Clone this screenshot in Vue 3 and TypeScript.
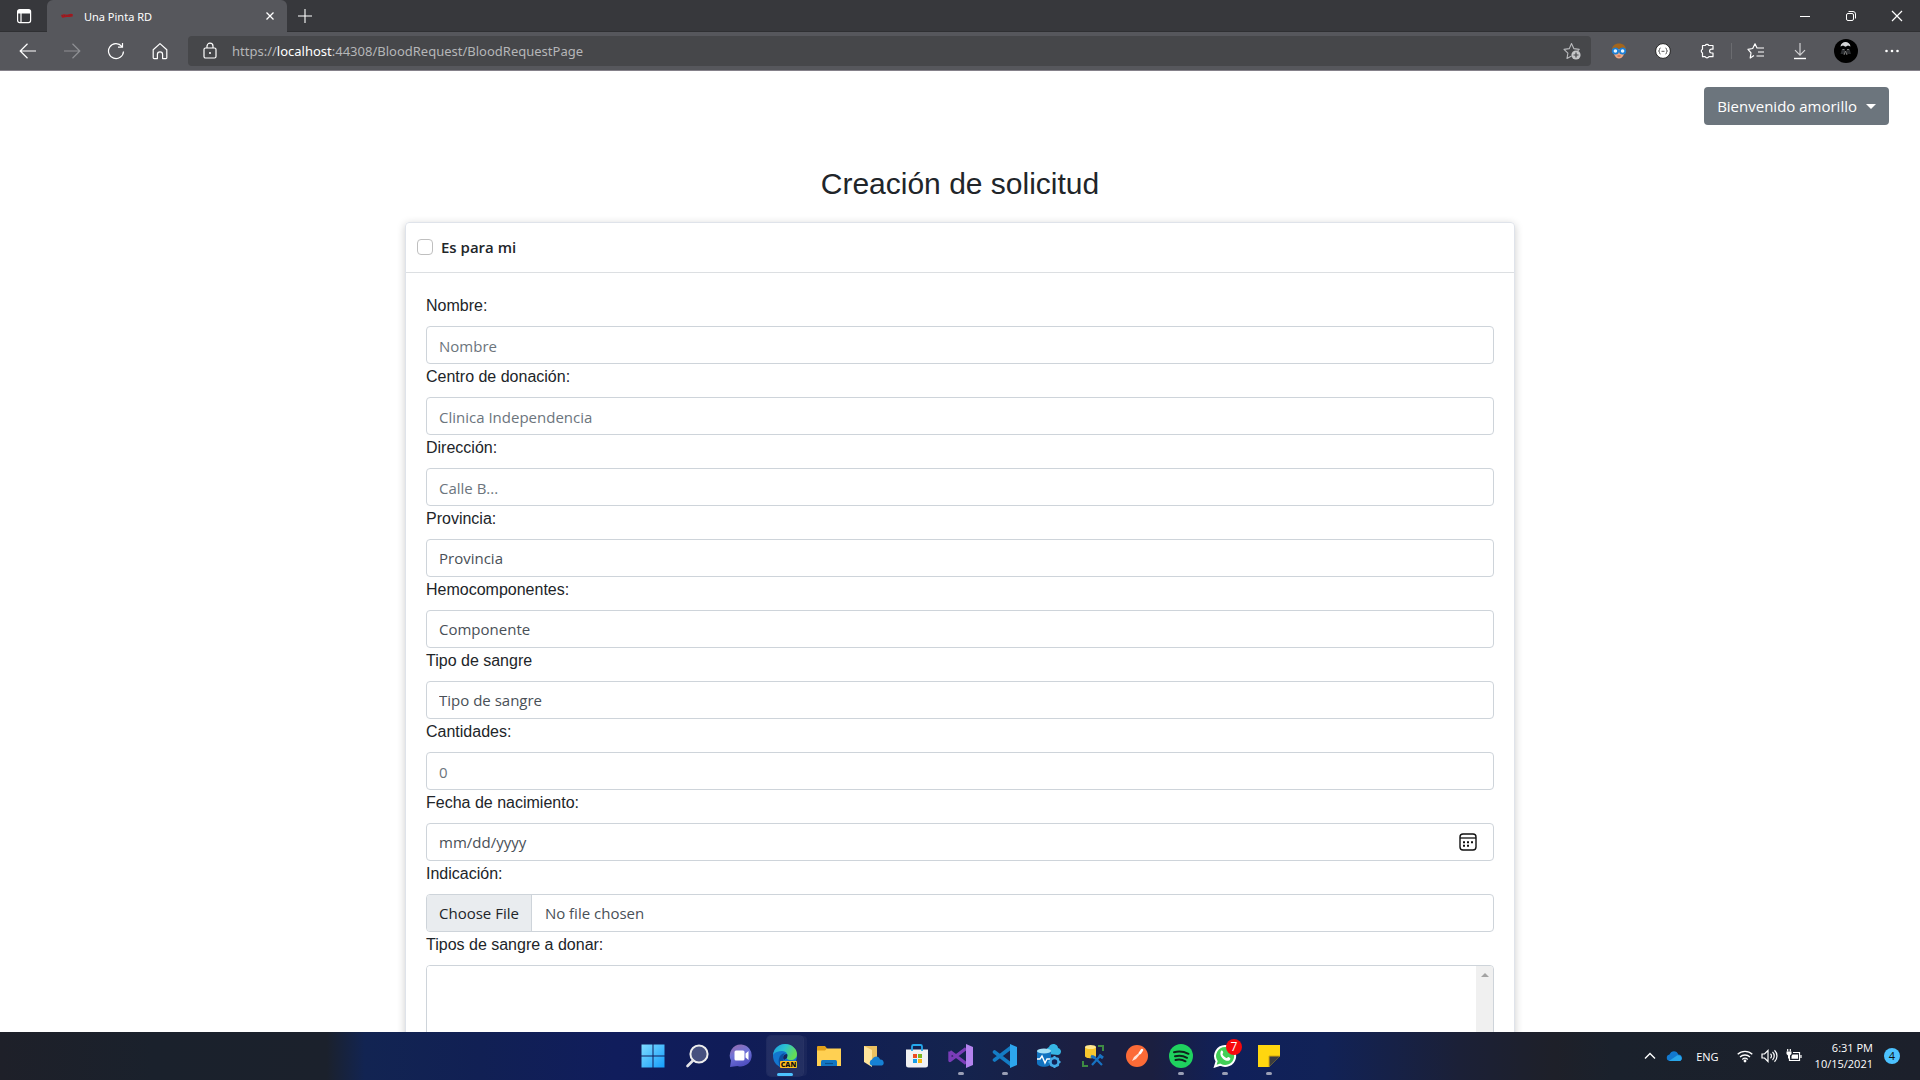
<script setup lang="ts">
import { ref } from 'vue'

interface Field {
  id: string
  label: string
  type: 'text' | 'number' | 'select'
  placeholder: string
}

const fields: Field[] = [
  { id: 'nombre', label: 'Nombre:', type: 'text', placeholder: 'Nombre' },
  { id: 'centro', label: 'Centro de donación:', type: 'text', placeholder: 'Clinica Independencia' },
  { id: 'direccion', label: 'Dirección:', type: 'text', placeholder: 'Calle B...' },
  { id: 'provincia', label: 'Provincia:', type: 'select', placeholder: 'Provincia' },
  { id: 'hemocomponentes', label: 'Hemocomponentes:', type: 'select', placeholder: 'Componente' },
  { id: 'tipo', label: 'Tipo de sangre', type: 'select', placeholder: 'Tipo de sangre' },
  { id: 'cantidades', label: 'Cantidades:', type: 'number', placeholder: '0' },
]

const forMe = ref(false)
const birthDate = ref('')
const fileInput = ref<HTMLInputElement | null>(null)
const fileName = ref('No file chosen')

function onFile(e: Event) {
  const f = (e.target as HTMLInputElement).files
  fileName.value = f && f.length ? f[0].name : 'No file chosen'
}
</script>

<template>
  <div class="desktop">
    <header class="browser">
      <div class="tabstrip">
        <button class="tab-menu" aria-label="Tab actions">
          <svg width="16" height="16" viewBox="0 0 16 16" fill="none" stroke="#fff" stroke-width="1.2">
            <rect x="1.6" y="1.6" width="13" height="13" rx="2" />
            <path d="M2 3h12M2 4.600h12" stroke-width="1.8" />
            <path d="M5 5v9.500" />
          </svg>
        </button>
        <div class="tab">
          <svg class="favicon" width="16" height="16" viewBox="0 0 16 16">
            <path d="M2 7l3-.8 3 .5 4-.9 2 .6-.5 2.200-3 .3-3 .1-4 .7-.6-.4z" fill="#a8161c" />
            <path d="M3 7.600h3M7.500 7.400h5" stroke="#742a30" stroke-width="1" stroke-dasharray="1 1" />
          </svg>
          <span class="tab-title">Una Pinta RD</span>
          <button class="tab-close" aria-label="Close tab">
            <svg width="8" height="8" viewBox="0 0 8 8" stroke="#fff" stroke-width="1.3"><path d="M.5.5l7 7M7.500.5l-7 7" /></svg>
          </button>
        </div>
        <button class="new-tab" aria-label="New tab">
          <svg width="14" height="14" viewBox="0 0 14 14" stroke="#fff" stroke-width="1.1"><path d="M7 0v14M0 7h14" /></svg>
        </button>
        <div class="window-controls">
          <button aria-label="Minimize"><svg width="12" height="12" viewBox="0 0 12 12" stroke="#fff"><path d="M1 6.500h10" /></svg></button>
          <button aria-label="Restore">
            <svg width="12" height="12" viewBox="0 0 12 12" fill="none" stroke="#fff"><rect x="1.500" y="3.500" width="7" height="7" rx="1.500" /><path d="M3.500 1.500H8a2.500 2.500 0 0 1 2.500 2.500V8.500" /></svg>
          </button>
          <button aria-label="Close"><svg width="12" height="12" viewBox="0 0 12 12" stroke="#fff" stroke-width="1.2"><path d="M1 1l10 10M11 1L1 11" /></svg></button>
        </div>
      </div>

      <div class="toolbar">
        <nav class="nav">
          <button aria-label="Back"><svg width="18" height="18" viewBox="0 0 18 18" fill="none" stroke="#fff" stroke-width="1.2"><path d="M17 9H1.500M8.500 1.800L1.200 9l7.300 7.200" /></svg></button>
          <button aria-label="Forward"><svg width="18" height="18" viewBox="0 0 18 18" fill="none" stroke="#8f9094" stroke-width="1.2"><path d="M1 9h15.500M9.500 1.800L16.800 9l-7.300 7.200" /></svg></button>
          <button aria-label="Refresh"><svg width="18" height="18" viewBox="0 0 18 18" fill="none" stroke="#fff" stroke-width="1.2"><path d="M16.500 9.500A7.500 7.500 0 1 1 14.800 4.300M15.500 1v4.200h-4.500" /></svg></button>
          <button aria-label="Home"><svg width="18" height="18" viewBox="0 0 18 18" fill="none" stroke="#fff" stroke-width="1.2"><path d="M2.200 7.800L9 1.600l6.800 6.200v8a.8.8 0 0 1-.8.8h-3.400v-4.200a2.600 2.600 0 0 0-5.200 0v4.200H3a.8.8 0 0 1-.8-.8z" stroke-linejoin="round" /></svg></button>
        </nav>
        <div class="address">
          <svg class="lock" width="16" height="18" viewBox="0 0 16 18" fill="none" stroke="#fff" stroke-width="1.2"><rect x="2" y="6" width="12" height="10" rx="1.500" /><path d="M5 6V4.200a3 3 0 0 1 6 0V6" /><circle cx="8" cy="11" r="1" fill="#fff" stroke="none" /></svg>
          <a class="url" href="#">https://<b>localhost</b>:44308/BloodRequest/BloodRequestPage</a>
          <button aria-label="Add to favorites">
            <svg width="18" height="18" viewBox="0 0 18 18" fill="none" stroke="#b9babd" stroke-width="1.1" stroke-linejoin="round"><path d="M8.500 14L4 16.400l.9-5.300L1 7.400l5.300-.8L8.500 1.500l2.300 5.100 5.400.8-1.500 1.500" /><circle cx="13" cy="13" r="4.600" fill="#c4c5c7" stroke="none" /><path d="M13 10.500v5M10.500 13h5" stroke="#48494c" stroke-width="1.200" /></svg>
          </button>
        </div>
        <div class="extensions">
          <button aria-label="Profile extension">
            <svg width="16" height="16" viewBox="0 0 16 16"><path d="M3 6h10v5c-1 3-3 4.600-5 4.600S4 14 3 11z" fill="#eda883" /><path d="M1.500 8C0 3 4 .5 8 .5S16 3 14.500 8L12 5 8 6 4 5z" fill="#a3651c" /><circle cx="4.400" cy="8" r="2.700" fill="#e8f6ff" stroke="#1c7fd6" stroke-width="1.800" /><circle cx="11.600" cy="8" r="2.700" fill="#e8f6ff" stroke="#1c7fd6" stroke-width="1.800" /><path d="M6.500 13h3" stroke="#b6543e" /></svg>
          </button>
          <button aria-label="JSON viewer">
            <svg width="16" height="16" viewBox="0 0 16 16" fill="none" stroke="#555" stroke-width="1"><circle cx="8" cy="8" r="7.400" fill="#fff" stroke="#222" /><path d="M5.500 5Q4.500 5 4.500 6.500T3.500 8q1 0 1 1.500T5.500 11M10.500 5q1 0 1 1.500t1 1.500q-1 0-1 1.500t-1 1.500M6.500 8.300h3" /></svg>
          </button>
          <button aria-label="Extensions">
            <svg width="16" height="16" viewBox="0 0 16 16" fill="none" stroke="#fff" stroke-width="1.200" stroke-linejoin="round"><path d="M3.500 2.500h2.700a2 2 0 0 1 3.600 0H14v3.700h-1.500a1.900 1.900 0 0 0 0 3.800H14v3.700H9.800a2 2 0 0 1-3.600 0H3.500V10a2.100 2.100 0 0 1 0-3.800z" /></svg>
          </button>
          <span class="divider"></span>
          <button aria-label="Favorites">
            <svg width="18" height="18" viewBox="0 0 18 18" fill="none" stroke="#fff" stroke-width="1.200" stroke-linejoin="round"><path d="M7 13.500L3.200 16l.8-5.200L1 7.300l4.700-.8L8 1.800l2 4.200h7M11 10h6M9.500 14H17" /></svg>
          </button>
          <button aria-label="Downloads">
            <svg width="14" height="18" viewBox="0 0 14 18" fill="none" stroke="#d0d0d2" stroke-width="1.200"><path d="M7 1v12M2 8.200l5 5 5-5" /><path d="M1 16.500h12" stroke="#fff" stroke-width="1.400" /></svg>
          </button>
          <button class="profile" aria-label="Profile">
            <svg width="24" height="24" viewBox="0 0 24 24"><circle cx="12" cy="12" r="12" fill="#000" /><path d="M6.500 7.500C7 1.500 16 1.500 16.500 7.500L14 6.500l-2.500 1.200L9 6.500z" fill="#d4d5d6" /><path d="M6.500 15l1.500-5 3 1 .5 4zM17 15l-1.500-5-3 1-.5 4z" fill="#2b2d30" /><path d="M8.500 10.500h2M13 10.500h2M10 16l1.500-4 1.500 4" stroke="#777" stroke-width="1" fill="none" /></svg>
          </button>
          <button aria-label="More">
            <svg width="14" height="4" viewBox="0 0 14 4" fill="#fff"><circle cx="1.500" cy="2" r="1.300" /><circle cx="7" cy="2" r="1.300" /><circle cx="12.500" cy="2" r="1.300" /></svg>
          </button>
        </div>
      </div>
    </header>

    <main class="page">
      <div class="userbar">
        <button class="user-button">Bienvenido amorillo <span class="caret"></span></button>
      </div>
      <h2>Creación de solicitud</h2>
      <form class="card" @submit.prevent>
        <div class="card-header">
          <input id="for-me" v-model="forMe" type="checkbox" />
          <label for="for-me">Es para mi</label>
        </div>
        <div class="card-body">
          <div v-for="f in fields" :key="f.id" class="field">
            <label :for="f.id">{{ f.label }}</label>
            <select v-if="f.type === 'select'" :id="f.id" class="control">
              <option>{{ f.placeholder }}</option>
            </select>
            <input v-else :id="f.id" class="control" :type="f.type" :placeholder="f.placeholder" />
          </div>
          <div class="field">
            <label for="fecha">Fecha de nacimiento:</label>
            <div class="control date">
              <input id="fecha" v-model="birthDate" type="text" placeholder="mm/dd/yyyy" />
              <button type="button" aria-label="Abrir calendario">
                <svg width="18" height="18" viewBox="0 0 18 18" fill="none" stroke="#111" stroke-width="1.400"><rect x="1" y="1" width="16" height="16" rx="3" /><path d="M1 5h16" stroke-width="1.300" /><path d="M4 9.200h2M8 9.200h2M12 9.200h2M4 12.700h2M8 12.700h2" stroke-width="2" /></svg>
              </button>
            </div>
          </div>
          <div class="field">
            <label for="indicacion">Indicación:</label>
            <div class="control file">
              <button type="button" @click="fileInput?.click()">Choose File</button>
              <span>{{ fileName }}</span>
              <input id="indicacion" ref="fileInput" type="file" hidden @change="onFile" />
            </div>
          </div>
          <div class="field">
            <label for="donar">Tipos de sangre a donar:</label>
            <div class="listbox">
              <select id="donar" multiple></select>
              <div class="scrollbar"><svg width="8" height="4" viewBox="0 0 8 4"><path d="M0 4l4-4 4 4z" fill="#a3a3a3" /></svg></div>
            </div>
          </div>
        </div>
      </form>
    </main>

    <footer class="taskbar">
      <div class="apps">
        <button aria-label="Start">
          <svg width="24" height="24" viewBox="0 0 24 24"><defs><linearGradient id="win" x1="0" y1="0" x2="1" y2="1"><stop offset="0" stop-color="#7fdcff" /><stop offset="1" stop-color="#149dfa" /></linearGradient></defs><path d="M.5.5h11v11H.5zM12.500.5h11v11h-11zM.5 12.500h11v11H.5zM12.500 12.500h11v11h-11z" fill="url(#win)" /></svg>
        </button>
        <button aria-label="Search">
          <svg width="24" height="24" viewBox="0 0 24 24"><circle cx="14" cy="10" r="8.600" fill="#46507f" stroke="#eee" stroke-width="2" /><path d="M8 16.500L2.500 22" stroke="#e4e4e8" stroke-width="2.600" stroke-linecap="round" /></svg>
        </button>
        <button aria-label="Chat">
          <svg width="24" height="24" viewBox="0 0 24 24"><defs><linearGradient id="chat" x1="0" y1="0" x2=".4" y2="1"><stop offset="0" stop-color="#9a6aa8" /><stop offset=".5" stop-color="#7073d8" /><stop offset="1" stop-color="#5050c0" /></linearGradient></defs><path d="M12.500.5a11 11 0 1 1-4 21.500L1 23l1-6.500A11 11 0 0 1 12.500.5z" fill="url(#chat)" /><rect x="5.500" y="6.500" width="10" height="10" rx="1.500" fill="#fff" /><path d="M16.500 9.500l3-2.500v9l-3-2.500z" fill="#fff" /></svg>
        </button>
        <button class="active" aria-label="Edge Canary">
          <svg width="26" height="24" viewBox="0 0 26 24"><defs><linearGradient id="edge" x1="0" y1="0" x2="1" y2=".4"><stop offset="0" stop-color="#1c9ade" /><stop offset=".5" stop-color="#2bc3d2" /><stop offset="1" stop-color="#65dc55" /></linearGradient></defs><circle cx="13" cy="12" r="12" fill="#1376cf" /><path d="M1 11C2 4 7 0 13 0c7 0 12 5 12 10 0 4-3 6-6 6-4 0-5-2-4-3 1-2 0-6-5-6-4 0-7 1-9 4z" fill="url(#edge)" /><path d="M9 24c-4-5-3-14 4-15-3 3-3 9 2 12z" fill="#0b4fa0" /><path d="M12 16c-2-3 0-6 3-6 1 1 0 3 0 4z" fill="#15255c" /><rect x="8" y="17" width="17" height="7" rx="1" fill="#ffc01e" /><text x="16.500" y="23" text-anchor="middle" font-family="Open Sans, sans-serif" font-weight="800" font-size="7" fill="#111">CAN</text></svg>
          <i class="running wide"></i>
        </button>
        <button aria-label="File Explorer">
          <svg width="26" height="24" viewBox="0 0 26 24"><path d="M1 3a1 1 0 0 1 1-1h7l2.500 3H24v10H1z" fill="#e2a01a" /><path d="M1 6.500h8l2-2h14V22H1z" fill="#ffd052" /><path d="M5 22v-4.500a1.500 1.500 0 0 1 1.500-1.500h13a1.500 1.500 0 0 1 1.500 1.500V22z" fill="#1276c4" /><path d="M9 19.500h8" stroke="#0a4f8c" stroke-width="1.200" /></svg>
        </button>
        <button aria-label="OneDrive Folder">
          <svg width="24" height="24" viewBox="0 0 24 24"><path d="M3 2h13v16H3z" fill="#ecc160" /><path d="M3 2l8 4v17l-8-5z" fill="#ffe49b" /><path d="M10 21.500a3.500 3.500 0 0 1 1-6c2-4 7-4 8 0 4-.5 5 5 2 6z" fill="#1681d4" /></svg>
        </button>
        <button aria-label="Microsoft Store">
          <svg width="24" height="24" viewBox="0 0 24 24"><path d="M1 5.500h22V21a2.500 2.500 0 0 1-2.500 2.500h-17A2.500 2.500 0 0 1 1 21z" fill="#f1f1f3" /><path d="M7 7V2.500A1.500 1.500 0 0 1 8.500 1h7A1.500 1.500 0 0 1 17 2.500V7" fill="none" stroke="#25a8ec" stroke-width="1.800" /><path d="M8 10h4v4H8z" fill="#ee4c23" /><path d="M13 10h4v4h-4z" fill="#7db71d" /><path d="M8 15h4v4H8z" fill="#16a0ea" /><path d="M13 15h4v4h-4z" fill="#fbb70e" /></svg>
        </button>
        <button aria-label="Visual Studio">
          <svg width="26" height="24" viewBox="0 0 26 24"><path d="M2 7.500v9L18 4.500M2 7.500l16 12" fill="none" stroke="#7b3cb8" stroke-width="3.400" stroke-linejoin="round" /><path d="M18 0l7 3v18l-7 3z" fill="#b483ee" /></svg>
          <i class="running"></i>
        </button>
        <button aria-label="Visual Studio Code">
          <svg width="26" height="24" viewBox="0 0 26 24"><path d="M2.500 8L19 20.500M2.500 16L19 3.500" fill="none" stroke="#147cc4" stroke-width="3.600" stroke-linecap="round" /><path d="M18 0l7 3v18l-7 3z" fill="#2da6ee" /></svg>
          <i class="running"></i>
        </button>
        <button aria-label="Azure Data Studio">
          <svg width="26" height="24" viewBox="0 0 26 24"><path d="M12 10a4 4 0 0 1 1-7c2-5 9-3 9 1 4 1 4 6 0 7z" fill="#36b6e4" /><path d="M1 7v12c0 5 14 5 14 0V7z" fill="#1273c0" /><ellipse cx="8" cy="7" rx="7" ry="2.500" fill="#a3dff6" /><path d="M1 15h3l2-3 3 7 2-4h3" fill="none" stroke="#fff" stroke-width="1.400" /><circle cx="18.500" cy="18" r="4" fill="#122458" stroke="#44ace8" stroke-width="2.500" /><path d="M18.500 12v2M18.500 22v2M12.500 18h2M22.500 18h2M14.500 14l1 1M21.500 21l1 1M22.500 14l-1 1M15.500 21l-1 1" stroke="#44ace8" stroke-width="2" /></svg>
        </button>
        <button aria-label="SQL Server Management Studio">
          <svg width="24" height="24" viewBox="0 0 24 24"><path d="M17 2h5v5M2 17v5h5" fill="none" stroke="#3e8b43" stroke-width="2" /><path d="M4 3v9c0 3 11 3 11 0V3z" fill="#f8c72e" /><ellipse cx="9.500" cy="3" rx="5.500" ry="2" fill="#ffe78e" /><path d="M12 12l9 9M20 11l-9 10" stroke="#1772c2" stroke-width="2.200" /><path d="M10 12l4 2M18 11l4 3" stroke="#1772c2" stroke-width="3" /></svg>
        </button>
        <button aria-label="Postman">
          <svg width="24" height="24" viewBox="0 0 24 24"><circle cx="12" cy="12" r="11" fill="#fc6b37" /><path d="M7 17l2-4 6-5 1 1-5 6z" fill="#ffe3d7" /><path d="M15 9l2-3" stroke="#fff" stroke-width="2.500" stroke-linecap="round" /></svg>
        </button>
        <button aria-label="Spotify">
          <svg width="24" height="24" viewBox="0 0 24 24"><circle cx="12" cy="12" r="12" fill="#1fd25f" /><path d="M5 8.200q7.500-2 14.500 1.600M6 12.300q6.500-1.600 12 1.500M6.500 16q5.500-1.300 10 1.300" fill="none" stroke="#10231c" stroke-width="2" stroke-linecap="round" /></svg>
          <i class="running"></i>
        </button>
        <button aria-label="WhatsApp">
          <svg width="24" height="24" viewBox="0 0 24 24"><path d="M12 2a10 10 0 1 1-4.800 18.700L2 22.500l1.600-5.200A10 10 0 0 1 12 2z" fill="#42cf56" stroke="#fff" stroke-width="2" /><path d="M8 7c1-1 2 0 2.200 1.500.2.900-1 1.200-.6 2 1 1.700 2 2.700 3.800 3.500.8.300 1.200-1.300 2-1 1.600.7 2.300 1 1.800 2.200-1 2.300-4 2-6.400.2C8 13.400 6.500 9.500 8 7z" fill="#fff" /></svg>
          <span class="badge">7</span>
          <i class="running"></i>
        </button>
        <button aria-label="Sticky Notes">
          <svg width="24" height="24" viewBox="0 0 24 24"><path d="M1 1h22v11L12 23H1z" fill="#ffd60f" /><path d="M12 23V12h11z" fill="#3b3c40" /><path d="M12 23V12h11" fill="none" stroke="#d5a80c" /></svg>
          <i class="running"></i>
        </button>
      </div>
      <div class="tray">
        <button aria-label="Show hidden icons"><svg width="12" height="8" viewBox="0 0 12 8" fill="none" stroke="#fff" stroke-width="1.400"><path d="M1 6.500l5-5 5 5" /></svg></button>
        <button class="cloud" aria-label="OneDrive"><svg width="16" height="10" viewBox="0 0 16 10"><path d="M3.500 10a3.300 3.300 0 0 1 0-6.500C5-1 11-1 12.300 3.500c4 0 5 5 1.700 6.500z" fill="#1279cf" /><path d="M3 10l8-5.500c4-1 6.500 3.500 3 5.500z" fill="#29a6e9" /></svg></button>
        <span class="lang">ENG</span>
        <div class="status">
          <svg width="16" height="14" viewBox="0 0 16 14" fill="none" stroke="#fff" stroke-width="1.300"><path d="M.7 5.300a10.500 10.500 0 0 1 14.600 0M3 8a7.200 7.200 0 0 1 10 0M5.300 10.400a4 4 0 0 1 5.400 0" /><circle cx="8" cy="12" r="1.400" fill="#fff" stroke="none" /></svg>
          <svg width="17" height="14" viewBox="0 0 17 14" fill="none" stroke="#fff" stroke-width="1.200"><path d="M1 5v4h2.500L7 12.500v-11L3.500 5zM9.500 4.800a3 3 0 0 1 0 4.400M11.500 3a5.500 5.500 0 0 1 0 8M13.500 1.200a8 8 0 0 1 0 11.600" /></svg>
          <svg width="16" height="14" viewBox="0 0 16 14" fill="none" stroke="#fff" stroke-width="1.200"><path d="M7 3.500h6.500v8h-10V9M15 6v3M1.700 0v2.500M4.300 0v2.500" /><path d="M.5 2.500h5V5L4 6.500v3H2v-3L.5 5zM6.500 5.500h5.500v4.200H5.500V7z" fill="#fff" stroke="none" /></svg>
        </div>
        <div class="clock"><span>6:31 PM</span><span>10/15/2021</span></div>
        <span class="count">4</span>
      </div>
    </footer>
  </div>
</template>

<style>
body {
  background: #fff;
}
</style>

<style scoped>
* {
  box-sizing: border-box;
}

.desktop {
  display: flex;
  flex-direction: column;
  height: 100vh;
  overflow: hidden;
  font-family: 'Open Sans', 'Noto Sans', sans-serif;
  color: #212529;
}

button {
  display: flex;
  align-items: center;
  justify-content: center;
  padding: 0;
  border: 0;
  background: none;
  font: inherit;
  color: inherit;
}

svg {
  display: block;
  flex: none;
}

/* Browser chrome */
.browser {
  flex: none;
  color: #fff;
  background: #56575c;
  border-bottom: 1px solid #85818a;
  font-family: 'Noto Sans', 'Open Sans', sans-serif;
}

.tabstrip {
  display: flex;
  height: 32px;
  background: #37383c;
  box-shadow: inset 0 -1px 0 #2f3033;
}

.tab-menu {
  width: 47px;
}

.tab {
  display: flex;
  align-items: center;
  width: 240px;
  padding: 0 11px 0 12px;
  border-radius: 6px 6px 0 0;
  background: #56575c;
}

.tab-title {
  flex: 1;
  padding-left: 9px;
  font-size: 11px;
}

.tab-close {
  width: 12px;
  height: 20px;
}

.new-tab {
  width: 36px;
}

.window-controls {
  display: flex;
  margin-left: auto;
}

.window-controls button {
  width: 46px;
}

.toolbar {
  display: flex;
  align-items: center;
  height: 38px;
}

.nav {
  display: flex;
  padding: 0 6px;
}

.nav button {
  width: 44px;
  height: 30px;
}

.address {
  display: flex;
  flex: 1;
  align-items: center;
  height: 30px;
  padding: 0 10px 0 14px;
  border-radius: 4px;
  background: #46474a;
}

.url {
  flex: 1;
  padding-left: 14px;
  font-size: 13px;
  color: #b5b6b8;
  text-decoration: none;
}

.url b {
  font-weight: 400;
  color: #fff;
}

.extensions {
  display: flex;
  align-items: center;
  padding: 0 6px;
}

.extensions button {
  width: 44px;
  height: 30px;
}

.extensions .profile {
  width: 48px;
}

.divider {
  width: 1px;
  height: 16px;
  margin: 0 2px;
  background: #6b6c70;
}

/* Page */
.page {
  flex: 1;
  min-height: 0;
  overflow: hidden;
}

.userbar {
  display: flex;
  justify-content: flex-end;
  padding: 16px 31px 0;
}

.user-button {
  height: 38px;
  padding: 0 13px;
  gap: 9px;
  border-radius: 4px;
  background: #6c757d;
  color: #fff;
  font-size: 15px;
}

.caret {
  border: 5px solid transparent;
  border-top-color: #fff;
  border-bottom: 0;
}

h2 {
  margin: 40px 0 20px;
  font: 400 30px/37px 'Liberation Sans', sans-serif;
  text-align: center;
}

.card {
  max-width: 1110px;
  margin: 0 auto;
  border: 1px solid #dfe3ea;
  border-radius: 4px;
  box-shadow: 0 2px 8px rgba(0, 0, 0, 0.2);
}

.card-header {
  display: flex;
  align-items: center;
  height: 50px;
  padding: 0 11px 2px;
  gap: 8px;
  border-bottom: 1px solid #dcdfe2;
  font-size: 15px;
  font-weight: 600;
}

.card-header input {
  appearance: none;
  width: 16px;
  height: 16px;
  margin: 0;
  border: 1px solid #bfbfbf;
  border-radius: 4px;
}

.card-header input:checked {
  background: #0d6efd;
}

.card-body {
  padding: 20px;
}

.field > label {
  display: block;
  margin-bottom: 8px;
  font: 16px/25px 'Liberation Sans', sans-serif;
}

.control {
  display: block;
  appearance: none;
  width: 100%;
  height: 38px;
  padding: 0 12px;
  border: 1px solid #ced4da;
  border-radius: 4px;
  background: #fff;
  color: #495057;
  font: 15px/24px 'Open Sans', 'Noto Sans', sans-serif;
}

input.control {
  padding-top: 2px;
}

.control::placeholder {
  color: #6c757d;
}

.control.date {
  display: flex;
  align-items: center;
  padding-right: 16px;
}

.date input {
  flex: 1;
  min-width: 0;
  padding: 0;
  border: 0;
  outline: 0;
  font: inherit;
  color: inherit;
}

.date input::placeholder {
  color: #495057;
}

.control.file {
  display: flex;
  align-items: center;
  gap: 13px;
  padding-left: 0;
}

.file button {
  height: 36px;
  padding: 0 12px;
  border-right: 1px solid #ced4da;
  border-radius: 3px 0 0 3px;
  background: #e9ecef;
  color: #212529;
}

.listbox {
  display: flex;
  height: 120px;
  border: 1px solid #ced4da;
  border-radius: 4px;
  overflow: hidden;
}

.listbox select {
  flex: 1;
  border: 0;
  background: #fff;
}

.scrollbar {
  display: flex;
  justify-content: center;
  width: 17px;
  padding-top: 7px;
  background: #f0f0f0;
}

/* Taskbar */
.taskbar {
  display: grid;
  grid-template-columns: 1fr auto 1fr;
  flex: none;
  height: 48px;
  color: #fff;
  background: linear-gradient(90deg, #1e2029 0%, #1a212c 8%, #1b212c 17%, #122452 19%, #112054 25%, #101d5c 32%, #101c58 38%, #14234e 50%, #1b1f42 56%, #1b1f40 60%, #10205a 64%, #112257 69%, #1b2037 76%, #1e2029 81%, #1a212c 84%, #1c202b 100%);
}

.apps {
  display: flex;
  grid-column: 2;
  align-items: center;
  padding-left: 2px;
}

.apps button {
  position: relative;
  width: 44px;
  height: 48px;
}

.apps .active {
  width: 36px;
  height: 40px;
  margin: 0 4px;
  border-radius: 4px;
  background: rgba(255, 255, 255, 0.08);
  box-shadow: 0 0 0 1px rgba(255, 255, 255, 0.06), 4px 0 0 rgba(255, 255, 255, 0.04);
}

.running {
  position: absolute;
  bottom: 5px;
  left: 50%;
  width: 6px;
  height: 3px;
  margin-left: -3px;
  border-radius: 2px;
  background: #9a9fb5;
}

.running.wide {
  bottom: 0;
  width: 16px;
  margin-left: -8px;
  background: #4cc2ff;
}

.badge {
  position: absolute;
  top: 7px;
  left: 23px;
  width: 16px;
  height: 16px;
  border-radius: 50%;
  background: #f8080c;
  font-size: 12px;
  line-height: 16px;
}

.tray {
  display: flex;
  align-items: center;
  justify-content: flex-end;
  padding-right: 20px;
  font-size: 11px;
}

.cloud {
  margin: 0 14px 0 10px;
}

.status {
  display: flex;
  align-items: center;
  gap: 8px;
  margin: 0 13px 0 18px;
}

.clock {
  display: flex;
  flex-direction: column;
  align-items: flex-end;
  line-height: 16px;
}

.count {
  width: 16px;
  height: 16px;
  margin-left: 11px;
  border-radius: 50%;
  background: #4cc2ff;
  color: #111;
  line-height: 16px;
  text-align: center;
}
</style>
